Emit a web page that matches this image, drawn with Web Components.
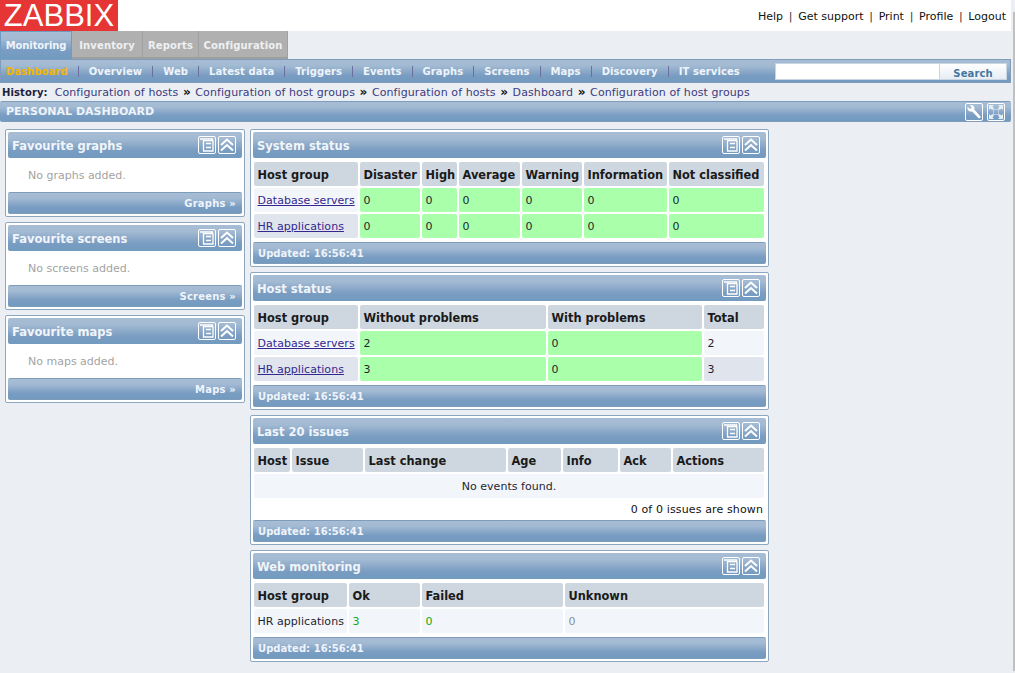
<!DOCTYPE html>
<html><head><meta charset="utf-8"><title>Zabbix dashboard</title>
<style>
html,body{margin:0;padding:0;height:100%;overflow:hidden;background:#ebeef2}
body{font:11px "DejaVu Sans",Verdana,sans-serif;color:#1f1f33;width:1011px;position:relative}
</style></head><body>
<zbx-header></zbx-header>
<zbx-tabs><zbx-tab active style="width:72px">Monitoring</zbx-tab><zbx-tab style="width:71px">Inventory</zbx-tab><zbx-tab style="width:56px">Reports</zbx-tab><zbx-tab style="width:89px">Configuration</zbx-tab></zbx-tabs>
<zbx-subnav><a slot="items" class="on">Dashboard</a><a slot="items">Overview</a><a slot="items">Web</a><a slot="items">Latest data</a><a slot="items">Triggers</a><a slot="items">Events</a><a slot="items">Graphs</a><a slot="items">Screens</a><a slot="items">Maps</a><a slot="items">Discovery</a><a slot="items">IT services</a></zbx-subnav>
<zbx-history></zbx-history>
<zbx-titlebar>PERSONAL DASHBOARD</zbx-titlebar>
<zbx-dashboard>
 <div slot="left">
  <zbx-widget heading="Favourite graphs"><zbx-empty>No graphs added.</zbx-empty><zbx-foot slot="foot" align="right">Graphs »</zbx-foot></zbx-widget>
  <zbx-widget heading="Favourite screens"><zbx-empty>No screens added.</zbx-empty><zbx-foot slot="foot" align="right">Screens »</zbx-foot></zbx-widget>
  <zbx-widget heading="Favourite maps"><zbx-empty>No maps added.</zbx-empty><zbx-foot slot="foot" align="right">Maps »</zbx-foot></zbx-widget>
 </div>
 <div slot="right">
  <zbx-widget heading="System status">
   <zbx-grid cols="104px 60px 35px 61px 60px 83px 95px">
    <zbx-cell h>Host group</zbx-cell><zbx-cell h>Disaster</zbx-cell><zbx-cell h>High</zbx-cell><zbx-cell h>Average</zbx-cell><zbx-cell h>Warning</zbx-cell><zbx-cell h>Information</zbx-cell><zbx-cell h>Not classified</zbx-cell>
    <zbx-cell link>Database servers</zbx-cell><zbx-cell ok>0</zbx-cell><zbx-cell ok>0</zbx-cell><zbx-cell ok>0</zbx-cell><zbx-cell ok>0</zbx-cell><zbx-cell ok>0</zbx-cell><zbx-cell ok>0</zbx-cell>
    <zbx-cell link alt>HR applications</zbx-cell><zbx-cell ok>0</zbx-cell><zbx-cell ok>0</zbx-cell><zbx-cell ok>0</zbx-cell><zbx-cell ok>0</zbx-cell><zbx-cell ok>0</zbx-cell><zbx-cell ok>0</zbx-cell>
   </zbx-grid>
   <zbx-foot slot="foot">Updated: 16:56:41</zbx-foot>
  </zbx-widget>
  <zbx-widget heading="Host status">
   <zbx-grid cols="104px 186px 154px 60px">
    <zbx-cell h>Host group</zbx-cell><zbx-cell h>Without problems</zbx-cell><zbx-cell h>With problems</zbx-cell><zbx-cell h>Total</zbx-cell>
    <zbx-cell link>Database servers</zbx-cell><zbx-cell ok>2</zbx-cell><zbx-cell ok>0</zbx-cell><zbx-cell>2</zbx-cell>
    <zbx-cell link alt>HR applications</zbx-cell><zbx-cell ok>3</zbx-cell><zbx-cell ok>0</zbx-cell><zbx-cell alt>3</zbx-cell>
   </zbx-grid>
   <zbx-foot slot="foot">Updated: 16:56:41</zbx-foot>
  </zbx-widget>
  <zbx-widget heading="Last 20 issues">
   <zbx-grid cols="36px 71px 141px 53px 55px 51px 91px">
    <zbx-cell h>Host</zbx-cell><zbx-cell h>Issue</zbx-cell><zbx-cell h>Last change</zbx-cell><zbx-cell h>Age</zbx-cell><zbx-cell h>Info</zbx-cell><zbx-cell h>Ack</zbx-cell><zbx-cell h>Actions</zbx-cell>
    <zbx-cell wide>No events found.</zbx-cell>
   </zbx-grid>
   <zbx-note>0 of 0 issues are shown</zbx-note>
   <zbx-foot slot="foot">Updated: 16:56:41</zbx-foot>
  </zbx-widget>
  <zbx-widget heading="Web monitoring">
   <zbx-grid cols="93px 71px 141px 199px">
    <zbx-cell h>Host group</zbx-cell><zbx-cell h>Ok</zbx-cell><zbx-cell h>Failed</zbx-cell><zbx-cell h>Unknown</zbx-cell>
    <zbx-cell>HR applications</zbx-cell><zbx-cell color="#12a912">3</zbx-cell><zbx-cell color="#12a912">0</zbx-cell><zbx-cell color="#8a8f94">0</zbx-cell>
   </zbx-grid>
   <zbx-foot slot="foot">Updated: 16:56:41</zbx-foot>
  </zbx-widget>
 </div>
</zbx-dashboard>
<zbx-scrollbar></zbx-scrollbar>
<script>
const GRAD='linear-gradient(#a7bdd5 0%,#a3bad3 25%,#7a9dc2 70%,#729abf 100%)';
const FONT='"DejaVu Sans",Verdana,sans-serif';
function def(name,html){
  customElements.define(name,class extends HTMLElement{
    constructor(){super();const s=this.attachShadow({mode:'open'});s.innerHTML=typeof html==='function'?html(this):html;}
  });
}
const ico={
 menu:`<svg viewBox="0 0 18 18"><rect x=".5" y=".5" width="17" height="17" rx="1.5" fill="none" stroke="#fff"/><path d="M2 3h12.5v1.6H5.5V15H15V4.6" fill="none" stroke="#fff" stroke-width="1.3"/><path d="M8 7.5h5M8 11.5h5" stroke="#fff" stroke-width="1.4"/></svg>`,
 up:`<svg viewBox="0 0 18 18"><rect x=".5" y=".5" width="17" height="17" rx="1.5" fill="none" stroke="#fff"/><path d="M3 9 9 3.5 15 9M3 14.5 9 9 15 14.5" fill="none" stroke="#fff" stroke-width="2"/></svg>`,
 wrench:`<svg viewBox="0 0 18 18"><rect x=".5" y=".5" width="17" height="17" rx="1.5" fill="none" stroke="#fff"/><path d="M2.5 3.8 5 6 6.8 4.5 4.8 2.3C6.8 1.6 9 2.6 9.4 4.6c.2.9 0 1.5-.2 2l6 6.5c.5.6.4 1.3 0 1.8-.5.5-1.2.5-1.8 0L7.2 8.6C5.2 9.1 2 8 2.5 3.8Z" fill="#fff"/></svg>`,
 full:`<svg viewBox="0 0 18 18"><rect x=".5" y=".5" width="17" height="17" rx="1.5" fill="none" stroke="#fff"/><path d="M2 2h5L5.4 3.7 7 5.3 5.3 7 3.7 5.4 2 7ZM16 2v5l-1.7-1.6L12.7 7 11 5.3l1.6-1.6L11 2ZM2 16v-5l1.7 1.6L5.3 11 7 12.7l-1.6 1.6L7 16ZM16 16h-5l1.6-1.7L11 12.7l1.7-1.7 1.6 1.6L16 11Z" fill="#e6eef6"/><rect x="6.5" y="6.5" width="5" height="5" fill="none" stroke="#dfe8f1" opacity=".6"/></svg>`
};
def('zbx-scrollbar',`<style>:host{position:fixed;display:block;right:0;top:12px;bottom:2px;width:2px;background:#c0c0c0}</style>`);
def('zbx-header',`<style>
:host{display:flex;justify-content:space-between;height:31px;background:#fff}
.logo{width:118px;height:31px;background:#e53535;color:#fff;font:31px/31px "Liberation Sans",Arial,sans-serif;text-align:center}
nav{display:flex;gap:5.7px;padding:10px 5px 0 0;font:11px/13px ${FONT};color:#111}
nav i{font-style:normal;color:#333}
</style><div class="logo">ZABBIX</div><nav><span>Help</span><i>|</i><span>Get support</span><i>|</i><span>Print</span><i>|</i><span>Profile</span><i>|</i><span>Logout</span></nav>`);
def('zbx-tabs',`<style>:host{display:flex;height:28px}</style><slot></slot>`);
def('zbx-tab',`<style>
:host{display:block;box-sizing:border-box;height:27px;margin-bottom:1px;text-align:center;background:#b0b0b0;box-shadow:0 1px 0 #a0a0a0,0 -1px 0 #9c9c9c inset;color:#eef0f2;font:bold 10px/29px ${FONT};letter-spacing:.15px;border-right:1px solid #a0a0a0}
:host([active]){height:28px;margin:0;background:${GRAD};border:1px solid #6f9cc5;color:#eef4fa;line-height:27px;letter-spacing:-.1px;box-shadow:none}
</style><slot></slot>`);
def('zbx-subnav',`<style>
:host{display:flex;box-sizing:border-box;height:24px;background:${GRAD};border:1px solid #7f9cbb;align-items:center;justify-content:space-between;padding-right:3px}
nav{display:flex;align-items:center;padding-left:5px;white-space:nowrap}
::slotted(a){display:block;font:bold 10px/11px ${FONT};letter-spacing:.085px;color:#eef4fa;padding-right:10px;margin-right:10px;border-right:1px solid #6f6f9f}
::slotted(a:last-child){border:0}
::slotted(a.on){color:#f2b600}
form{display:flex;height:17px;margin-top:1px}
input{box-sizing:border-box;width:165px;height:17px;border:1px solid #c8d5e2;background:#fff;padding:0;margin:0}
button{box-sizing:border-box;width:67px;height:17px;border:1px solid #c8d5e2;border-left:0;background:linear-gradient(#fff,#e6edf3);color:#44779f;font:bold 10px/15px ${FONT};letter-spacing:.1px;padding:2px 0 0;margin:0}
</style><nav><slot name="items"></slot></nav><form onsubmit="return false"><input type="text" aria-label="Search"><button>Search</button></form>`);
def('zbx-history',`<style>
:host{display:flex;height:18px;align-items:center;padding-left:2px;font:11px/13px ${FONT};letter-spacing:.09px;color:#3b3b80;gap:4px;white-space:nowrap}
b{color:#1f1f40;margin-right:3px;font-size:10px;letter-spacing:.1px}i{font-style:normal;font-weight:bold;color:#111;font-size:12px;width:9px;text-align:center}
</style><b>History:</b><span>Configuration of hosts</span><i>»</i><span>Configuration of host groups</span><i>»</i><span>Configuration of hosts</span><i>»</i><span>Dashboard</span><i>»</i><span>Configuration of host groups</span>`);
def('zbx-titlebar',`<style>
:host{display:flex;box-sizing:border-box;height:21px;background:${GRAD};border:1px solid #7f9cbb;border-width:1px 0;border-radius:2px;align-items:center;justify-content:space-between;padding:0 6px 0 6px;color:#eef4fa;font:bold 11px/13px ${FONT}}
div{display:flex}
svg{display:block;width:18px;height:18px;margin-left:4px}
</style><slot></slot><div>${ico.wrench}${ico.full}</div>`);
def('zbx-dashboard',`<style>
:host{display:grid;grid-template-columns:240px 519px;column-gap:5px;padding:7px 0 0 5px}
::slotted(div){display:flex;flex-direction:column;gap:5px}
</style><slot name="left"></slot><slot name="right"></slot>`);
def('zbx-widget',el=>`<style>
:host{display:block;box-sizing:border-box;background:#fff;border:1px solid #8ea7c0;border-radius:2px;padding:2px}
header{display:flex;justify-content:space-between;align-items:center;height:26px;background:${GRAD};border-radius:2px;padding:0 6px 0 4px;color:#f1f5f9;font:bold 11.5px/14px ${FONT}}
header span{padding-top:2px}
.i{display:flex}
.i svg{display:block;width:18px;height:18px;margin-left:2px}
main{display:block;padding:4px 2px 4px 1px}
</style><header><span>${el.getAttribute('heading')}</span><div class="i">${ico.menu}${ico.up}</div></header><main><slot></slot></main><slot name="foot"></slot>`);
def('zbx-foot',`<style>
:host{display:block;box-sizing:border-box;height:22px;background:${GRAD};border:1px solid #7f9cbb;border-width:1px 0;border-radius:2px;padding:0 5px;color:#eef4fa;font:bold 10px/22px ${FONT};letter-spacing:.03px;overflow:hidden}
:host([align=right]){text-align:right;padding-right:6px;letter-spacing:.2px}
</style><slot></slot>`);
def('zbx-empty',`<style>:host{display:block;height:26px;padding-left:19px;font:11px/28px ${FONT};color:#a3a3a3}</style><slot></slot>`);
def('zbx-note',`<style>:host{display:block;height:21px;text-align:right;font:11px/24px ${FONT};letter-spacing:.13px;color:#111;margin:0 1px -3px 0}</style><slot></slot>`);
def('zbx-grid',el=>`<style>:host{display:grid;grid-template-columns:${el.getAttribute('cols')};gap:2px}</style><slot></slot>`);
def('zbx-cell',el=>`<style>
:host{display:block;box-sizing:border-box;height:24px;border-radius:2px;padding:0 3.5px;background:#f2f6fa;font:11px/26px ${FONT};letter-spacing:.04px;color:#1f1f33;white-space:nowrap;overflow:hidden}
:host([alt]){background:#e0e5ed}
:host([h]){background:#ced6e0;font-weight:bold;font-size:11.4px;color:#1a1a1a;letter-spacing:0}
:host([ok]){background:#aaffaa}
:host([wide]){grid-column:1/-1;text-align:center}
:host([link]){color:#33288e;text-decoration:underline}
:host([color]){color:${el.getAttribute('color')||'inherit'}}
</style><slot></slot>`);
</script>
</body></html>
